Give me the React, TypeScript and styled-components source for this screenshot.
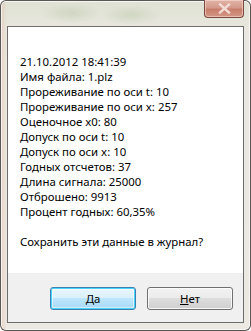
import React from "react";
import styled, { createGlobalStyle } from "styled-components";

const GlobalStyle = createGlobalStyle`
  html, body {
    margin: 0;
    padding: 0;
    background: #ffffff;
  }
  * {
    box-sizing: border-box;
  }
`;

const WindowFrame = styled.div`
  position: relative;
  width: 251px;
  height: 331px;
  padding: 25px 6px 7px 6px;
  border: 1px solid rgba(40, 40, 40, 0.75);
  border-radius: 6px;
  background:
    radial-gradient(ellipse 30px 10px at 70px 12px, rgba(170, 190, 150, 0.35), transparent),
    radial-gradient(ellipse 30px 10px at 130px 14px, rgba(170, 190, 150, 0.35), transparent),
    linear-gradient(90deg, rgba(230, 190, 170, 0.5) 0, rgba(236, 232, 224, 0) 6px),
    linear-gradient(180deg, #dfe2d4 0, #e9e7df 30px, #ece8e2 100%);
  box-shadow: inset 0 0 0 1px rgba(255, 255, 255, 0.7);
`;

const CloseButton = styled.div`
  position: absolute;
  top: -1px;
  right: 6px;
  width: 40px;
  height: 18px;
  display: flex;
  align-items: center;
  justify-content: center;
  border: 1px solid #7a4a40;
  border-top: none;
  border-radius: 0 0 4px 4px;
  background: linear-gradient(180deg, #e2b3a8 0, #d49a8b 45%, #c97e6c 55%, #d49686 100%);
  box-shadow: inset 0 0 0 1px rgba(255, 230, 220, 0.5);
`;

const ClientArea = styled.div`
  display: flex;
  flex-direction: column;
  height: 100%;
  border: 1px solid #6d6d6d;
  background: #ffffff;
`;

const Message = styled.div`
  flex: 1;
  padding: 27px 12px 0 12px;
  font-family: "Noto Sans", "Open Sans", sans-serif;
  font-size: 11.4px;
  line-height: 15px;
  color: #000000;
  background: #ffffff;
`;

const Line = styled.div<{ $gapBefore?: boolean }>`
  white-space: nowrap;
  margin-top: ${(p) => (p.$gapBefore ? "15px" : "0")};
`;

const ButtonPanel = styled.div`
  height: 49px;
  display: flex;
  justify-content: flex-end;
  align-items: flex-start;
  gap: 11px;
  padding: 14px 10px 0 0;
  background: #f0f0f0;
`;

const DialogButton = styled.button<{ $default?: boolean }>`
  width: 86px;
  height: 23px;
  padding: 0;
  border-radius: 3px;
  font-family: "Noto Sans", "Open Sans", sans-serif;
  font-size: 11.4px;
  color: #000000;
  border: 1px solid ${(p) => (p.$default ? "#3c7fb1" : "#707070")};
  background: ${(p) =>
    p.$default
      ? "linear-gradient(180deg, #eaf6fd 0, #d9f0fc 50%, #bee6fd 50%, #a7d9f5 100%)"
      : "linear-gradient(180deg, #f2f2f2 0, #ebebeb 50%, #dddddd 50%, #cfcfcf 100%)"};
  box-shadow: ${(p) =>
    p.$default
      ? "inset 0 0 0 1px #48d2ff, inset 0 0 0 2px rgba(255,255,255,0.5)"
      : "inset 0 0 0 1px rgba(255,255,255,0.8)"};
`;

const Mnemonic = styled.span`
  text-decoration: underline;
`;

const lines = [
  "21.10.2012 18:41:39",
  "Имя файла: 1.plz",
  "Прореживание по оси t: 10",
  "Прореживание по оси x: 257",
  "Оценочное x0: 80",
  "Допуск по оси t: 10",
  "Допуск по оси x: 10",
  "Годных отсчетов: 37",
  "Длина сигнала: 25000",
  "Отброшено: 9913",
  "Процент годных: 60,35%",
];

export default function App() {
  return (
    <>
      <GlobalStyle />
      <WindowFrame>
        <CloseButton>
          <svg width="13" height="11" viewBox="0 0 13 11">
            <path
              d="M2 1.5 L11 9.5 M11 1.5 L2 9.5"
              stroke="#f3dcd6"
              strokeWidth="2.4"
              strokeLinecap="square"
              fill="none"
            />
          </svg>
        </CloseButton>
        <ClientArea>
          <Message>
            {lines.map((l) => (
              <Line key={l}>{l}</Line>
            ))}
            <Line $gapBefore>Сохранить эти данные в журнал?</Line>
          </Message>
          <ButtonPanel>
            <DialogButton $default>Да</DialogButton>
            <DialogButton>
              <Mnemonic>Н</Mnemonic>ет
            </DialogButton>
          </ButtonPanel>
        </ClientArea>
      </WindowFrame>
    </>
  );
}
